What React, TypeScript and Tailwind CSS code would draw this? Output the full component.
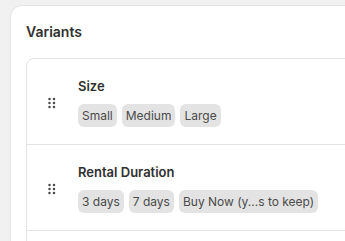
import React from 'react';

type Variant = { name: string; values: string[] };

const variants: Variant[] = [
  { name: 'Size', values: ['Small', 'Medium', 'Large'] },
  { name: 'Rental Duration', values: ['3 days', '7 days', 'Buy Now (y...s to keep)'] },
];

function DragHandle() {
  return (
    <svg width="8" height="12" viewBox="0 0 8 12" className="shrink-0 text-[#4a4a4a]" fill="currentColor">
      <circle cx="1.5" cy="2" r="1.25" />
      <circle cx="6" cy="2" r="1.25" />
      <circle cx="1.5" cy="6" r="1.25" />
      <circle cx="6" cy="6" r="1.25" />
      <circle cx="1.5" cy="10" r="1.25" />
      <circle cx="6" cy="10" r="1.25" />
    </svg>
  );
}

export default function App() {
  return (
    <div className="h-screen overflow-hidden bg-[#f1f1f1] pl-[10px] pt-[5px] font-['Inter',sans-serif]">
      <div className="w-[420px] rounded-xl border border-[#e3e3e3] bg-white px-[15px] pt-4 pb-4">
        <h2 className="text-[14px] leading-5 font-semibold text-[#303030]">Variants</h2>

        {/* Variant list */}
        <div className="mt-4 rounded-lg border border-[#e3e3e3]">
          {variants.map((v) => (
            <div
              key={v.name}
              className="flex items-center border-b border-[#e3e3e3] pl-[21px] pt-[19px] pb-[17px]"
            >
              <DragHandle />
              <div className="ml-[22px] flex flex-col">
                <div className="text-[13px] leading-4 font-semibold text-[#303030]">{v.name}</div>
                <div className="mt-[10px] flex gap-[5px]">
                  {v.values.map((val) => (
                    <span
                      key={val}
                      className="rounded-md bg-[#e3e3e3] px-1 py-1 text-[12px] leading-[15px] text-[#4a4a4a]"
                    >
                      {val}
                    </span>
                  ))}
                </div>
              </div>
            </div>
          ))}
          <div className="h-10" />
        </div>
      </div>
    </div>
  );
}
